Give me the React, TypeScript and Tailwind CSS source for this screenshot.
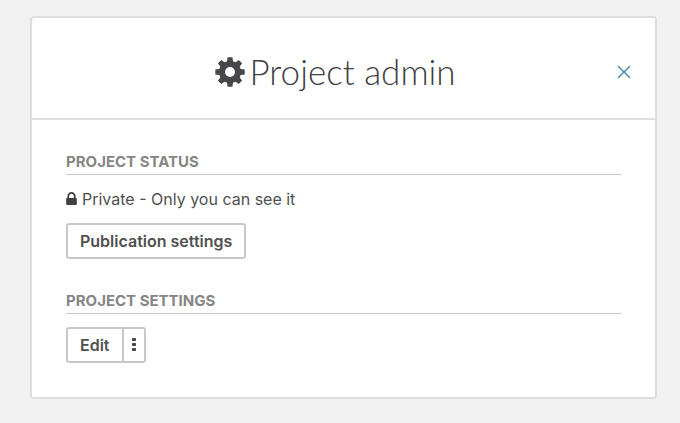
import { ReactNode } from 'react';

type SectionPropsT = { title: string; children: ReactNode };

const toothAngles = [0, 45, 90, 135];

const CogIcon = () => (
  <svg viewBox="0 0 30 30" className="size-[30px] shrink-0 fill-[#46474b] stroke-[#46474b]" aria-hidden="true">
    <circle cx="15" cy="15" r="8" fill="none" strokeWidth="6" />
    {/* Each bar makes two opposite teeth, the ring's hole stays open */}
    {toothAngles.map((angle) => (
      <g key={angle} transform={`rotate(${angle} 15 15)`} stroke="none">
        <path d="M12.6 0.3h4.8l0.9 6h-6.6z" />
        <path d="M12.6 29.7h4.8l0.9-6h-6.6z" />
      </g>
    ))}
  </svg>
);

const LockIcon = () => (
  <svg viewBox="320 128 1152 1408" className="mb-0.5 h-[13px] w-[11px] shrink-0 fill-[#3f3f44]" aria-hidden="true">
    <path d="M640 768h512v-192q0-106-75-181t-181-75-181 75-75 181v192zm832 96v576q0 40-28 68t-68 28h-960q-40 0-68-28t-28-68v-576q0-40 28-68t68-28h32v-192q0-184 132-316t316-132 316 132 132 316v192h32q40 0 68 28t28 68z" />
  </svg>
);

const Section = ({ title, children }: SectionPropsT) => (
  <section>
    <h2 className="border-b border-[#c8c8c8] pb-0.5 text-[15px] leading-5 font-bold text-[#858585] uppercase">
      {title}
    </h2>
    {children}
  </section>
);

export default function App() {
  return (
    <div className="min-h-screen bg-[#f1f1f1] pt-4 pr-[23px] pb-6 pl-[30px] font-['Inter',sans-serif] text-[#505050]">
      <main className="rounded-[4px] border-2 border-[#dedede] bg-white">
        <header className="grid h-[102px] grid-cols-[1fr_auto_1fr] items-center border-b-2 border-[#dedede] pt-2 pr-6 pl-2">
          <h1 className="col-start-2 flex items-center gap-1 font-['Lato',sans-serif] text-[35px] leading-10 font-light text-[#3f3f44]">
            <CogIcon />
            <span className="pb-0.5">Project admin</span>
          </h1>
          <button type="button" aria-label="Close" className="justify-self-end">
            <svg viewBox="0 0 14 14" className="size-[14px] stroke-[#4b80b5]" fill="none" strokeWidth="1.4" aria-hidden="true">
              <path d="M1 1l12 12M13 1L1 13" />
            </svg>
          </button>
        </header>

        <div className="flex flex-col gap-8 px-[34px] pt-8 pb-[34px]">
          <Section title="Project status">
            <p className="mt-[14px] flex items-center gap-[5px] text-base leading-5">
              <LockIcon />
              Private - Only you can see it
            </p>
            <button
              type="button"
              className="mt-[14px] h-9 rounded-[3px] border-2 border-[#c8c8c8] px-3 text-base leading-5 font-semibold"
            >
              Publication settings
            </button>
          </Section>

          <Section title="Project settings">
            <div className="mt-[13px] flex h-9 w-fit rounded-[3px] border-2 border-[#c8c8c8] text-base leading-5 font-semibold">
              <button type="button" className="px-3">
                Edit
              </button>
              <button type="button" aria-label="More options" className="border-l-2 border-[#c8c8c8] px-[7px]">
                <svg viewBox="0 0 6 14" className="h-[14px] w-[6px] fill-[#46474b]" aria-hidden="true">
                  <rect x="1" y="0" width="4" height="3" rx="0.8" />
                  <rect x="1" y="5" width="4" height="3" rx="0.8" />
                  <rect x="1" y="10" width="4" height="3" rx="0.8" />
                </svg>
              </button>
            </div>
          </Section>
        </div>
      </main>
    </div>
  );
}
